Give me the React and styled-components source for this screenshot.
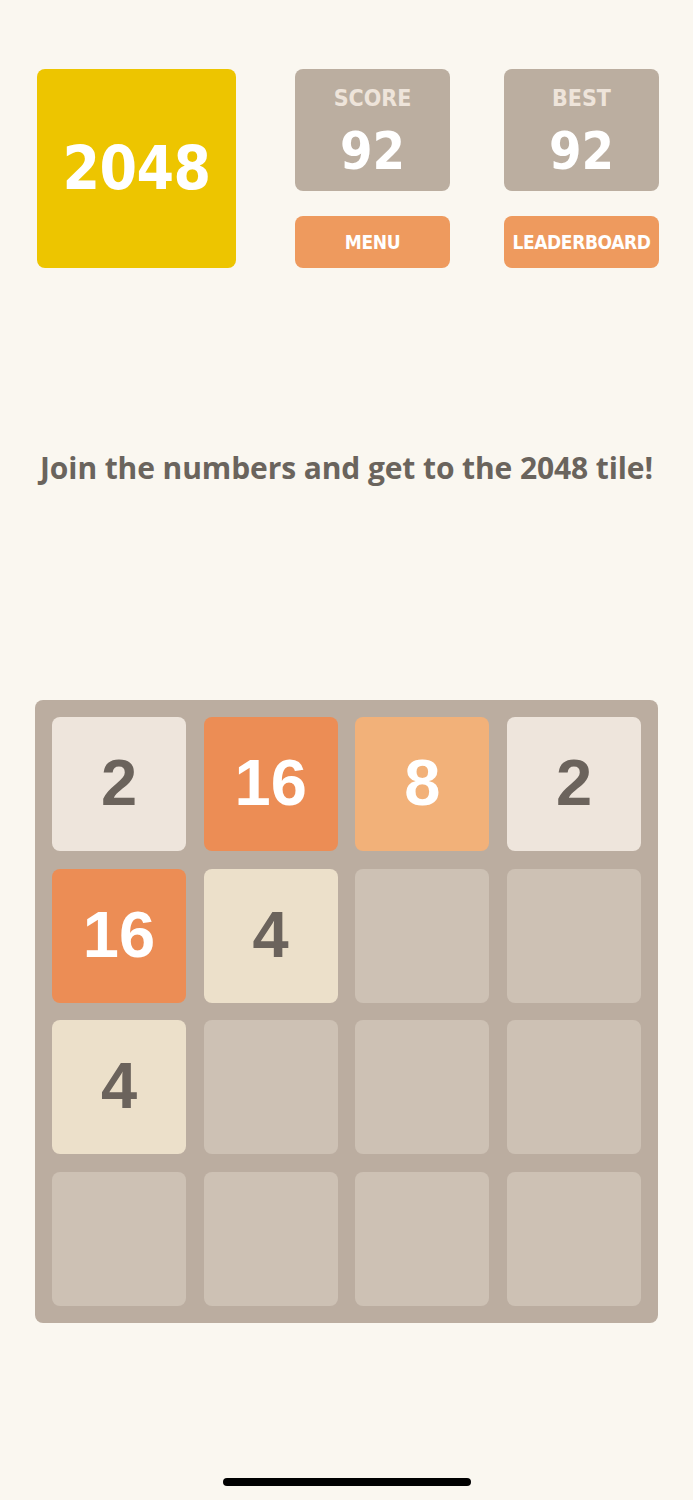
import React from "react";
import styled, { createGlobalStyle } from "styled-components";

const Global = createGlobalStyle`
  html, body { margin: 0; padding: 0; background: #faf7f0; }
  * { box-sizing: border-box; }
`;

const Page = styled.div`
  width: 693px;
  height: 1500px;
  display: flex;
  flex-direction: column;
  background: #faf7f0;
`;

const Header = styled.header`
  display: flex;
  margin: 69px 0 0 37px;
`;

const Logo = styled.div`
  width: 199px;
  height: 199px;
  border-radius: 8px;
  background: #edc500;
  color: #fff;
  display: flex;
  align-items: center;
  justify-content: center;
  font-family: "DejaVu Sans Condensed", "DejaVu Sans", sans-serif;
  font-weight: 700;
  font-size: 60px;
  letter-spacing: -0.5px;
  padding-bottom: 2px;
`;

const Controls = styled.div`
  margin-left: 59px;
  display: grid;
  grid-template-columns: 155px 155px;
  grid-template-rows: 122px 52px;
  column-gap: 54px;
  row-gap: 25px;
`;

const ScoreBox = styled.div`
  border-radius: 8px;
  background: #bbaea0;
  display: flex;
  flex-direction: column;
  align-items: center;
  font-family: "DejaVu Sans Condensed", "DejaVu Sans", sans-serif;
  font-weight: 700;
`;

const ScoreLabel = styled.div`
  margin-top: 15px;
  font-size: 23px;
  line-height: 28px;
  color: #eee4da;
`;

const ScoreValue = styled.div`
  margin-top: 9px;
  font-size: 52px;
  line-height: 60px;
  color: #fff;
`;

const ActionButton = styled.button`
  border: none;
  border-radius: 8px;
  background: #ee9a5e;
  color: #fff;
  font-family: "DejaVu Sans Condensed", "DejaVu Sans", sans-serif;
  font-weight: 700;
  font-size: 19px;
  letter-spacing: -0.4px;
  padding: 0;
  display: flex;
  align-items: center;
  justify-content: center;
`;

const Tagline = styled.p`
  margin: 182px 0 0;
  text-align: center;
  font-family: "Open Sans", sans-serif;
  font-weight: 700;
  font-size: 30px;
  line-height: 36px;
  color: #6a645d;
  letter-spacing: -0.1px;
  white-space: nowrap;
`;

const Board = styled.div`
  margin: 214px 0 0 35px;
  width: 623px;
  height: 623px;
  border-radius: 8px;
  background: #bbada0;
  padding: 17px;
  display: grid;
  grid-template-columns: repeat(4, 1fr);
  grid-template-rows: repeat(4, 1fr);
  gap: 17.6px;
`;

const tileStyles = {
  0: { bg: "#cdc1b4", fg: "transparent" },
  2: { bg: "#eee5dc", fg: "#6b635c" },
  4: { bg: "#ece0ca", fg: "#6b635c" },
  8: { bg: "#f2b179", fg: "#fff" },
  16: { bg: "#ec8d55", fg: "#fff" },
};

const Tile = styled.div`
  border-radius: 8px;
  background: ${(p) => tileStyles[p.$v].bg};
  color: ${(p) => tileStyles[p.$v].fg};
  display: flex;
  align-items: center;
  justify-content: center;
  font-family: "Liberation Sans", Arial, sans-serif;
  font-weight: 700;
  font-size: 65px;
  padding-bottom: 3px;
`;

const HomeIndicator = styled.div`
  margin: auto auto 14px;
  width: 248px;
  height: 8px;
  border-radius: 4px;
  background: #000;
`;

const grid = [
  [2, 16, 8, 2],
  [16, 4, 0, 0],
  [4, 0, 0, 0],
  [0, 0, 0, 0],
];

export default function App() {
  return (
    <Page>
      <Global />
      <Header>
        <Logo>2048</Logo>
        <Controls>
          <ScoreBox>
            <ScoreLabel>SCORE</ScoreLabel>
            <ScoreValue>92</ScoreValue>
          </ScoreBox>
          <ScoreBox>
            <ScoreLabel>BEST</ScoreLabel>
            <ScoreValue>92</ScoreValue>
          </ScoreBox>
          <ActionButton>MENU</ActionButton>
          <ActionButton>LEADERBOARD</ActionButton>
        </Controls>
      </Header>
      <Tagline>Join the numbers and get to the 2048 tile!</Tagline>
      <Board>
        {grid.flat().map((v, i) => (
          <Tile key={i} $v={v}>
            {v ? v : ""}
          </Tile>
        ))}
      </Board>
      <HomeIndicator />
    </Page>
  );
}
